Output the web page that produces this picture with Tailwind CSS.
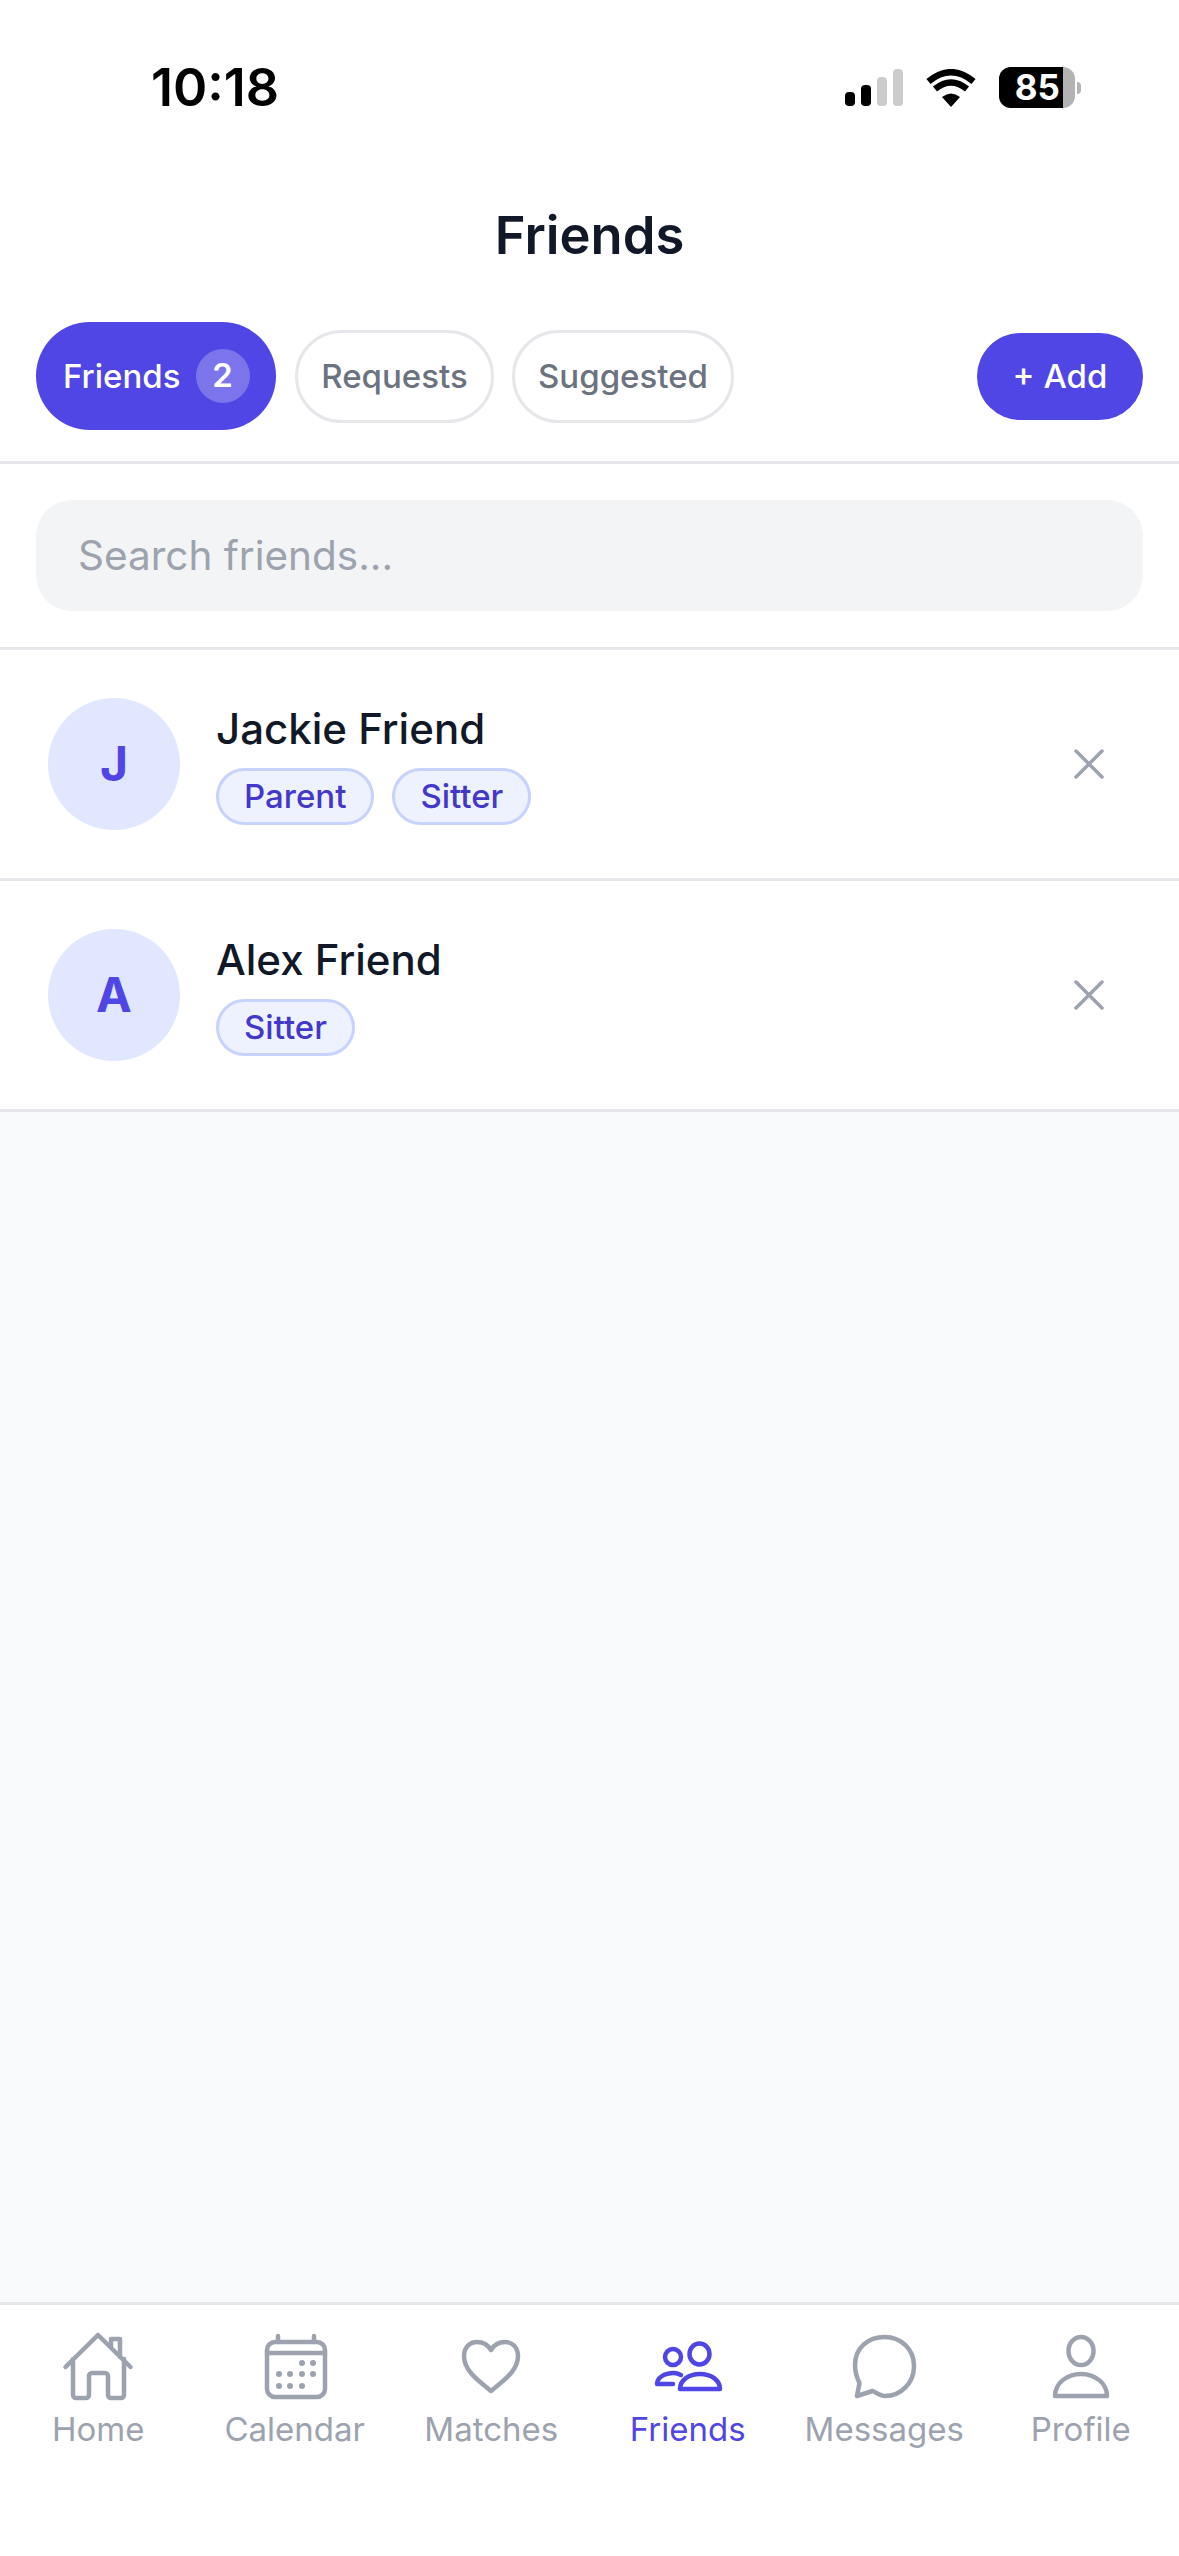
<!DOCTYPE html>
<html lang="en">
<head>
    <meta charset="UTF-8">
    <meta name="viewport" content="width=device-width, initial-scale=1.0">
    <title>Friends</title>
    <script src="https://cdn.jsdelivr.net/npm/@tailwindcss/browser@4"></script>
</head>
<body class="bg-white font-['Inter',sans-serif]">
<div class="w-[1179px] h-[2556px] flex flex-col overflow-hidden">

    <!-- status bar -->
    <div class="h-[170px] shrink-0 flex justify-between items-start pt-[63px] pl-[151px] pr-[98px]">
        <span class="text-[52px] leading-[50px] font-semibold text-black">10:18</span>
        <div class="flex items-center gap-[23px] pt-[4px]">
            <svg width="58" height="38" viewBox="0 0 58 38">
                <rect x="0" y="23" width="10" height="14" rx="4" fill="#000"/>
                <rect x="16" y="16" width="10" height="21" rx="4" fill="#000"/>
                <rect x="32" y="8" width="10" height="29" rx="4" fill="#ccc"/>
                <rect x="48" y="0" width="10" height="37" rx="4" fill="#ccc"/>
            </svg>
            <svg width="50" height="38" viewBox="0 0 50 38">
                <path d="M25 38 L16 28 Q25 21 34 28 Z" fill="#000"/>
                <path d="M9 20 Q25 7 41 20" fill="none" stroke="#000" stroke-width="6.5"/>
                <path d="M2.5 12.5 Q25 -6 47.5 12.5" fill="none" stroke="#000" stroke-width="6.5"/>
            </svg>
            <div class="flex items-center gap-[2px]">
                <div class="w-[76px] h-[41px] rounded-[12px] overflow-hidden flex bg-[#b3b3b3]">
                    <div class="w-[64px] h-full bg-black text-white text-[35px] leading-[41px] font-bold text-right pr-[3px]">85</div>
                </div>
                <div class="w-[4px] h-[12px] bg-[#b3b3b3] rounded-r-full"></div>
            </div>
        </div>
    </div>

    <!-- title -->
    <h1 class="h-[130px] shrink-0 flex items-center justify-center text-[52.5px] font-semibold text-[#111827]">Friends</h1>

    <!-- tabs -->
    <div class="shrink-0 flex items-center h-[164px] pt-[23px] pb-[33px] px-[36px] border-b-[3px] border-[#e5e7eb]">
        <div class="h-[108px] w-[240px] rounded-full bg-[#4f46e5] flex items-center pl-[27px] gap-[15px] text-white text-[33px] font-medium">
            <span class="pt-[2px]">Friends</span>
            <span class="w-[54px] h-[54px] rounded-full bg-white/25 flex items-center justify-center font-semibold">2</span>
        </div>
        <div class="ml-[19px] mt-[2px] h-[93px] w-[199px] rounded-full border-[3px] border-[#e5e7eb] flex items-center justify-center text-[#6b7280] text-[33px] font-medium">Requests</div>
        <div class="ml-[18px] mt-[2px] h-[93px] w-[222px] rounded-full border-[3px] border-[#e5e7eb] flex items-center justify-center text-[#6b7280] text-[33px] font-medium">Suggested</div>
        <div class="ml-auto mt-[2px] h-[87px] w-[166px] rounded-full bg-[#4f46e5] flex items-center justify-center text-white text-[33px] font-medium">+ Add</div>
    </div>

    <!-- search -->
    <div class="shrink-0 h-[186px] pt-[36px] px-[36px] border-b-[3px] border-[#e5e7eb]">
        <input type="text" placeholder="Search friends..." class="w-full h-[111px] rounded-[36px] bg-[#f3f4f6] px-[42px] text-[40.5px] placeholder-[#9ca3af] outline-none">
    </div>

    <!-- friend rows -->
    <div class="shrink-0 h-[231px] flex items-center pl-[48px] pr-[75px] border-b-[3px] border-[#e5e7eb]">
        <div class="w-[132px] h-[132px] rounded-full bg-[#e0e7ff] flex items-center justify-center text-[#4f46e5] text-[48px] font-bold">J</div>
        <div class="ml-[36px] flex flex-col">
            <span class="text-[42px] leading-[52px] font-medium text-[#111827]">Jackie Friend</span>
            <div class="flex gap-[18px] mt-[13px]">
                <span class="h-[57px] px-[25px] flex items-center rounded-full bg-[#eef2ff] border-[3px] border-[#c7d2fe] text-[#4338ca] text-[33px] font-medium">Parent</span>
                <span class="h-[57px] px-[25px] flex items-center rounded-full bg-[#eef2ff] border-[3px] border-[#c7d2fe] text-[#4338ca] text-[33px] font-medium">Sitter</span>
            </div>
        </div>
        <svg class="ml-auto" width="30" height="30" viewBox="0 0 30 30" fill="none" stroke="#9ca3af" stroke-width="3.5" stroke-linecap="round"><path d="M2 2 L28 28 M28 2 L2 28"/></svg>
    </div>
    <div class="shrink-0 h-[231px] flex items-center pl-[48px] pr-[75px] border-b-[3px] border-[#e5e7eb]">
        <div class="w-[132px] h-[132px] rounded-full bg-[#e0e7ff] flex items-center justify-center text-[#4f46e5] text-[48px] font-bold">A</div>
        <div class="ml-[36px] flex flex-col">
            <span class="text-[42px] leading-[52px] font-medium text-[#111827]">Alex Friend</span>
            <div class="flex gap-[18px] mt-[13px]">
                <span class="h-[57px] px-[25px] flex items-center rounded-full bg-[#eef2ff] border-[3px] border-[#c7d2fe] text-[#4338ca] text-[33px] font-medium">Sitter</span>
            </div>
        </div>
        <svg class="ml-auto" width="30" height="30" viewBox="0 0 30 30" fill="none" stroke="#9ca3af" stroke-width="3.5" stroke-linecap="round"><path d="M2 2 L28 28 M28 2 L2 28"/></svg>
    </div>

    <div class="flex-1 bg-[#f9fafb]"></div>

    <!-- bottom nav -->
    <div class="shrink-0 h-[254px] grid grid-cols-6 border-t-[3px] border-[#e5e7eb] pt-[26px] text-[#9ca3af] text-[33px]">
        <div class="flex flex-col items-center">
            <svg width="72" height="72" viewBox="0 0 72 72" fill="none" stroke="currentColor" stroke-width="4.5" stroke-linecap="round" stroke-linejoin="round">
                <path d="M3.5 36 L36 4 L68.5 36"/>
                <path d="M11 28 V64 a3 3 0 0 0 3 3 H24 a3 3 0 0 0 3-3 V45 a3 3 0 0 1 3-3 H43 a3 3 0 0 1 3 3 V64 a3 3 0 0 0 3 3 H59 a3 3 0 0 0 3-3 V28"/>
                <path d="M49 16 V8 H58 V26"/>
            </svg>
            <span class="mt-[4px] leading-[44px]">Home</span>
        </div>
        <div class="flex flex-col items-center">
            <svg width="72" height="72" viewBox="0 0 72 72" fill="none" stroke="currentColor" stroke-width="4.5" stroke-linecap="round" stroke-linejoin="round">
                <rect x="8" y="11" width="58" height="55" rx="8"/>
                <path d="M8 22 H66 M19 5 V11 M55 5 V11"/>
                <g fill="currentColor" stroke="none">
                    <circle cx="43" cy="32" r="3"/><circle cx="54" cy="32" r="3"/>
                    <circle cx="20" cy="43" r="3"/><circle cx="31" cy="43" r="3"/><circle cx="43" cy="43" r="3"/><circle cx="54" cy="43" r="3"/>
                    <circle cx="20" cy="55" r="3"/><circle cx="31" cy="55" r="3"/><circle cx="43" cy="55" r="3"/>
                </g>
            </svg>
            <span class="mt-[4px] leading-[44px]">Calendar</span>
        </div>
        <div class="flex flex-col items-center">
            <svg width="72" height="72" viewBox="0 0 72 72" fill="none" stroke="currentColor" stroke-width="4.5" stroke-linecap="round" stroke-linejoin="round">
                <path d="M36 60 C24 50 9 40 9 25 C9 16 15 11 22 11 C28 11 33 14 36 19 C39 14 44 11 50 11 C57 11 63 16 63 25 C63 40 48 50 36 60 Z"/>
            </svg>
            <span class="mt-[4px] leading-[44px]">Matches</span>
        </div>
        <div class="flex flex-col items-center text-[#4f46e5]">
            <svg width="72" height="72" viewBox="0 0 72 72" fill="none" stroke="currentColor" stroke-width="4.5" stroke-linecap="round" stroke-linejoin="round">
                <ellipse cx="47.5" cy="23" rx="10" ry="10.5"/>
                <circle cx="21" cy="26" r="8"/>
                <path d="M28 58 C28 49 37 43 48 43 C59 43 68 49 68 58 Z"/>
                <path d="M21 53 H5 C5 47 12 42 22 42 C25 42 27 43 29 44"/>
            </svg>
            <span class="mt-[4px] leading-[44px]">Friends</span>
        </div>
        <div class="flex flex-col items-center">
            <svg width="72" height="72" viewBox="0 0 72 72" fill="none" stroke="currentColor" stroke-width="4.5" stroke-linecap="round" stroke-linejoin="round">
                <path d="M11.5 52 C8.5 46 7 40 7 34 C7 17 20 6 36.5 6 C53 6 66 18 66 35 C66 52 53 65 37 65 C33 65 29 62 24.5 60 L9 65 Z"/>
            </svg>
            <span class="mt-[4px] leading-[44px]">Messages</span>
        </div>
        <div class="flex flex-col items-center">
            <svg width="72" height="72" viewBox="0 0 72 72" fill="none" stroke="currentColor" stroke-width="4.5" stroke-linecap="round" stroke-linejoin="round">
                <ellipse cx="36" cy="20" rx="12.5" ry="14"/>
                <path d="M10 65 H62 C62 52 50 43 36 43 C22 43 10 52 10 65 Z"/>
            </svg>
            <span class="mt-[4px] leading-[44px]">Profile</span>
        </div>
    </div>
</div>
</body>
</html>
